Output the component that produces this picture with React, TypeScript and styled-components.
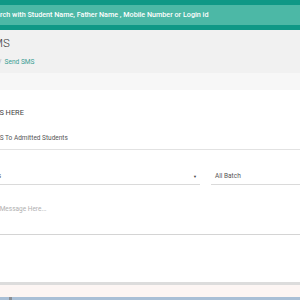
import React from "react";
import styled, { createGlobalStyle } from "styled-components";

const Global = createGlobalStyle`
  html, body { margin: 0; padding: 0; }
  body { width: 300px; height: 300px; overflow: hidden; font-family: Roboto, "Liberation Sans", sans-serif; background: #fff; }
`;

const Page = styled.div`
  width: 300px;
  height: 300px;
  display: flex;
  flex-direction: column;
  overflow: hidden;
`;

const TopBar = styled.div`
  background: #0f9886;
  padding: 5px 0 5px;
  height: 30px;
  box-sizing: border-box;
  display: flex;
`;

const SearchBox = styled.div`
  flex: 1;
  background: #4cb8a6;
  display: flex;
  align-items: center;
  overflow: hidden;
`;

const Shifted = styled.span<{ $shift: number }>`
  display: block;
  white-space: nowrap;
  margin-left: ${(p) => p.$shift}px;
`;

const SearchText = styled(Shifted)`
  color: #fff;
  font-size: 7.2px;
  font-weight: 500;
`;

const Header = styled.div`
  background: #f1f1f1;
  height: 43px;
  display: flex;
  flex-direction: column;
  padding-top: 7px;
  box-sizing: border-box;
`;

const Title = styled(Shifted)`
  font-size: 11.5px;
  font-weight: 300;
  color: #333;
  line-height: 13px;
`;

const Crumbs = styled(Shifted)`
  margin-top: 8px;
  font-size: 6.6px;
  color: #aaa;
`;

const Sep = styled.span`
  padding: 0 3px;
`;

const CrumbLink = styled.span`
  color: #3a9d93;
`;

const Gap = styled.div`
  background: #f7f7f7;
  height: 17px;
`;

const Card = styled.div`
  background: #fff;
  height: 193px;
  border-bottom: 3px solid #dcdcdc;
  display: flex;
  flex-direction: column;
  overflow: hidden;
`;

const CardTitle = styled(Shifted)`
  margin-top: 18px;
  font-size: 7.4px;
  font-weight: 400;
  color: #444;
  line-height: 9px;
`;

const TabRow = styled.div`
  margin-top: 17px;
  height: 15px;
  border-bottom: 1px solid #e2e2e2;
  overflow: hidden;
`;

const TabLabel = styled(Shifted)`
  font-size: 6.5px;
  color: #555;
  line-height: 8px;
`;

const SelectRow = styled.div`
  margin-top: 19px;
  display: grid;
  grid-template-columns: 200px 89px;
  column-gap: 11px;
`;

const Select = styled.div`
  height: 15px;
  border-bottom: 1px solid #dadada;
  display: flex;
  align-items: center;
  justify-content: space-between;
  overflow: hidden;
`;

const SelectText = styled(Shifted)`
  font-size: 6.5px;
  color: #555;
`;

const Arrow = styled.span`
  font-size: 4px;
  color: #444;
  margin-right: 3px;
`;

const TextArea = styled.div`
  margin-top: 20px;
  height: 29px;
  border-bottom: 1px solid #d4d4d4;
  overflow: hidden;
`;

const Placeholder = styled(Shifted)`
  font-size: 6.5px;
  color: #b0b0b0;
`;

const Footer = styled.div`
  background: #fcf5f3;
  height: 12px;
`;

const Taskbar = styled.div`
  background: #a9bfd6;
  height: 3px;
  display: flex;
  padding-left: 9px;
`;

const TaskIcon = styled.div`
  width: 3px;
  height: 3px;
  background: #8a8f96;
`;

export default function App() {
  return (
    <Page>
      <Global />
      <TopBar>
        <SearchBox>
          <SearchText $shift={-12}>
            Search with Student Name, Father Name , Mobile Number or Login id
          </SearchText>
        </SearchBox>
      </TopBar>
      <Header>
        <Title $shift={-42}>Send SMS</Title>
        <Crumbs $shift={-22}>
          Home<Sep>/</Sep>
          <CrumbLink>Send SMS</CrumbLink>
        </Crumbs>
      </Header>
      <Gap />
      <Card>
        <CardTitle $shift={-32}>SEND SMS HERE</CardTitle>
        <TabRow>
          <TabLabel $shift={-26}>Send SMS To Admitted Students</TabLabel>
        </TabRow>
        <SelectRow>
          <Select>
            <SelectText $shift={-24}>All Class</SelectText>
            <Arrow>▼</Arrow>
          </Select>
          <Select>
            <SelectText $shift={4}>All Batch</SelectText>
          </Select>
        </SelectRow>
        <TextArea>
          <Placeholder $shift={-17}>Enter Message Here...</Placeholder>
        </TextArea>
      </Card>
      <Footer />
      <Taskbar>
        <TaskIcon />
      </Taskbar>
    </Page>
  );
}
